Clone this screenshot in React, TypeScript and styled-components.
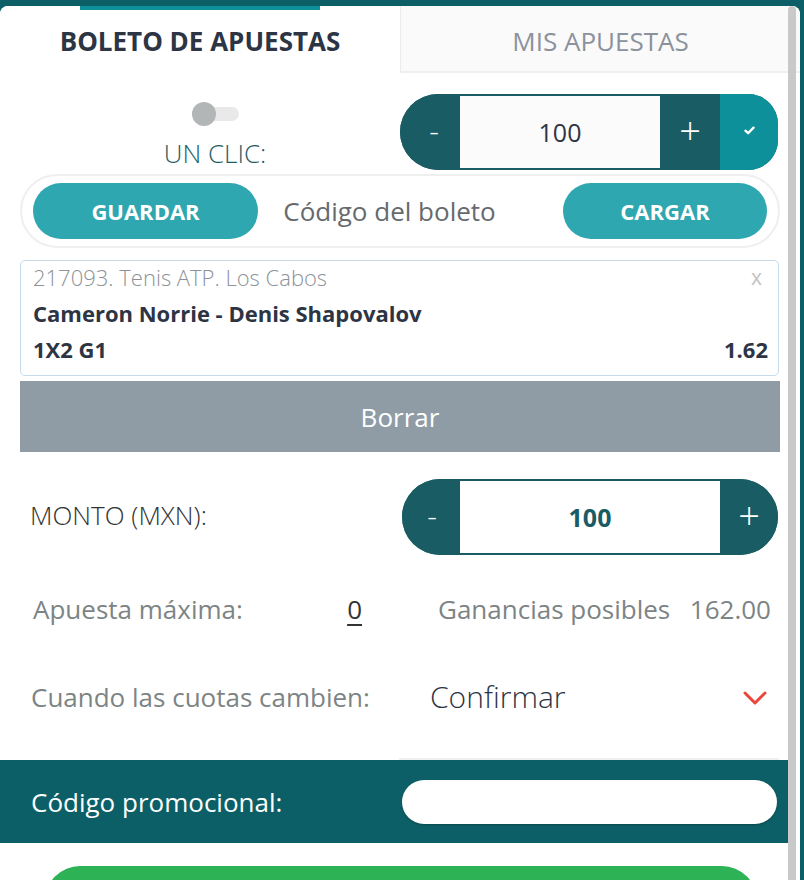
import React, { useState } from 'react';
import styled, { createGlobalStyle } from 'styled-components';

const DARK_TEAL = '#0c5f66';
const STEP_TEAL = '#1a5c64';
const BRIGHT_TEAL = '#0e909b';
const BUTTON_TEAL = '#2fa7b1';
const INK = '#2d3545';
const MUTED = '#7d8485';

const GlobalStyle = createGlobalStyle`
    body {
        margin: 0;
        background: ${DARK_TEAL};
        font-family: 'Open Sans', 'Liberation Sans', sans-serif;
    }
    * {
        box-sizing: border-box;
    }
`;

const Page = styled.div`
    height: 880px;
    overflow: hidden;
    padding-top: 6px;
`;

const Panel = styled.div`
    width: 800px;
    height: 874px;
    background: #ffffff;
    border-radius: 8px 8px 0 0;
    display: flex;
    overflow: hidden;
`;

const Content = styled.div`
    width: 788px;
    display: flex;
    flex-direction: column;
    & > * {
        flex-shrink: 0;
    }
`;

const ScrollTrack = styled.div`
    width: 8px;
    background: #c9c9c9;
    border-radius: 4px 4px 0 0;
`;

const Tabs = styled.div`
    display: grid;
    grid-template-columns: 400px 1fr;
    height: 67px;
    margin-right: -12px;
`;

const Tab = styled.div<{ $active?: boolean }>`
    display: flex;
    flex-direction: column;
    align-items: center;
    font-size: 26px;
    line-height: 36px;
    font-weight: ${(p) => (p.$active ? 700 : 400)};
    color: ${(p) => (p.$active ? INK : '#8a929d')};
    background: ${(p) => (p.$active ? '#ffffff' : '#fafafa')};
    border-left: ${(p) => (p.$active ? 'none' : '1px solid #ececec')};
    border-bottom: ${(p) => (p.$active ? 'none' : '2px solid #efefef')};
`;

const TabIndicator = styled.div<{ $show?: boolean }>`
    width: 240px;
    height: 4px;
    background: ${(p) => (p.$show ? BRIGHT_TEAL : 'transparent')};
`;

const TabLabel = styled.span`
    margin-top: 13px;
`;

const OneClickRow = styled.div`
    display: grid;
    grid-template-columns: 400px 1fr;
    padding: 21px 10px 0 0;
`;

const OneClick = styled.div`
    display: flex;
    flex-direction: column;
    align-items: center;
    padding: 8px 0 0 30px;
`;

const Toggle = styled.button`
    position: relative;
    width: 47px;
    height: 24px;
    border: none;
    background: transparent;
    padding: 0;
    cursor: pointer;
    &::before {
        content: '';
        position: absolute;
        left: 12px;
        right: 0;
        top: 5px;
        height: 14px;
        border-radius: 7px;
        background: #e9e9e9;
    }
    &::after {
        content: '';
        position: absolute;
        left: 0;
        top: 0;
        width: 24px;
        height: 24px;
        border-radius: 50%;
        background: #b3b6b6;
    }
`;

const OneClickLabel = styled.span`
    margin-top: 9px;
    font-size: 26px;
    line-height: 36px;
    font-weight: 300;
    color: #1d5e66;
`;

const Stepper = styled.div<{ $check?: boolean }>`
    display: flex;
    height: 76px;
    background: ${STEP_TEAL};
    border-radius: ${(p) => (p.$check ? '38px 30px 30px 38px' : '38px')};
    overflow: hidden;
`;

const StepButton = styled.button<{ $w: number; $bg?: string; $pad?: number; $minus?: boolean }>`
    width: ${(p) => p.$w}px;
    flex-shrink: 0;
    border: none;
    background: ${(p) => p.$bg || STEP_TEAL};
    color: #ffffff;
    font-family: inherit;
    font-size: ${(p) => (p.$minus ? 30 : 38)}px;
    font-weight: 300;
    padding: 0 0 4px ${(p) => p.$pad || 0}px;
    display: flex;
    align-items: center;
    justify-content: center;
    cursor: pointer;
`;

const StepValue = styled.div<{ $bold?: boolean }>`
    flex: 1;
    margin: 2px 0;
    background: ${(p) => (p.$bold ? '#ffffff' : '#fbfbfb')};
    display: flex;
    align-items: center;
    justify-content: center;
    font-size: 25px;
    font-weight: ${(p) => (p.$bold ? 700 : 400)};
    color: ${(p) => (p.$bold ? STEP_TEAL : INK)};
`;

const CodeBar = styled.div`
    margin: 3px 8px 0 20px;
    height: 74px;
    border: 2px solid #efefef;
    border-radius: 37px;
    display: grid;
    grid-template-columns: 225px 1fr 204px;
    align-items: center;
    padding: 0 11px;
`;

const PillButton = styled.button`
    height: 56px;
    border: none;
    border-radius: 28px;
    background: ${BUTTON_TEAL};
    color: #ffffff;
    font-family: inherit;
    font-size: 22px;
    font-weight: 700;
    cursor: pointer;
`;

const CodeLabel = styled.span`
    text-align: center;
    font-size: 26px;
    color: #666a6e;
    padding-right: 42px;
`;

const BetCard = styled.div`
    margin: 12px 9px 0 20px;
    height: 116px;
    border: 1.5px solid #c7dbea;
    border-radius: 5px;
    padding: 0 10px 0 12px;
    display: flex;
    flex-direction: column;
`;

const BetLine = styled.div<{ $first?: boolean }>`
    display: flex;
    justify-content: space-between;
    align-items: center;
    height: 36px;
    margin-top: ${(p) => (p.$first ? -2 : 0)}px;
`;

const EventName = styled.span`
    font-size: 22px;
    font-weight: 300;
    color: #8d9298;
`;

const Close = styled.span`
    font-size: 21px;
    color: #c2c2c2;
    margin-right: 6px;
`;

const Strong = styled.span`
    font-size: 22px;
    font-weight: 700;
    color: ${INK};
`;

const ClearButton = styled.button`
    margin: 5px 8px 0 20px;
    height: 71px;
    border: none;
    background: #8f9ca6;
    color: #ffffff;
    font-family: inherit;
    font-size: 26px;
    cursor: pointer;
`;

const AmountRow = styled.div`
    margin-top: 27px;
    display: grid;
    grid-template-columns: 402px 376px;
    align-items: center;
`;

const AmountLabel = styled.span`
    padding: 0 0 4px 30px;
    font-size: 26px;
    font-weight: 300;
    color: #333333;
`;

const InfoRow = styled.div`
    display: grid;
    grid-template-columns: 405px 1fr auto;
    align-items: center;
    height: 60px;
    margin-top: 24px;
    padding: 0 17px 0 33px;
    font-size: 26px;
    color: ${MUTED};
`;

const InfoPair = styled.div`
    display: flex;
    justify-content: space-between;
    padding-right: 76px;
`;

const Linked = styled.span`
    color: #333333;
    text-decoration: underline;
    text-underline-offset: 5px;
`;

const OddsRow = styled.div`
    display: grid;
    grid-template-columns: 399px 1fr;
    height: 121px;
    align-items: stretch;
`;

const OddsLabel = styled.span`
    padding: 40px 0 0 31px;
    font-size: 26px;
    line-height: 36px;
    color: ${MUTED};
`;

const Select = styled.div`
    display: flex;
    align-items: flex-start;
    justify-content: space-between;
    padding: 40px 12px 0 31px;
    margin-right: 9px;
    border-bottom: 2px solid #efefef;
    font-size: 30px;
    line-height: 36px;
    font-weight: 300;
    color: ${INK};
    svg {
        margin-top: 12px;
    }
`;

const PromoBar = styled.div`
    height: 83px;
    background: ${DARK_TEAL};
    display: grid;
    grid-template-columns: 402px 1fr;
    align-items: center;
    padding-right: 11px;
`;

const PromoLabel = styled.span`
    padding-left: 31px;
    font-size: 26px;
    color: #ffffff;
`;

const PromoInput = styled.input`
    height: 44px;
    border: none;
    border-radius: 22px;
    background: #ffffff;
    box-shadow: 0 1px 2px rgba(0, 0, 0, 0.25);
    outline: none;
    padding: 0 20px;
    font-family: inherit;
    font-size: 20px;
`;

const PlaceButton = styled.button`
    margin: 23px 31px 0 45px;
    height: 70px;
    border: none;
    border-radius: 35px;
    background: #2eb256;
`;

const CheckIcon = () => (
    <svg width="11" height="9" viewBox="0 0 12 10" fill="none">
        <path d="M1.5 5.2 L4.5 8 L10.5 1.8" stroke="#ffffff" strokeWidth="2.6" strokeLinecap="round" strokeLinejoin="round" />
    </svg>
);

const Chevron = () => (
    <svg width="24" height="14" viewBox="0 0 24 14" fill="none">
        <path d="M2 2 L12 12 L22 2" stroke="#e8473a" strokeWidth="3" strokeLinecap="round" strokeLinejoin="round" />
    </svg>
);

export default function App() {
    const [oneClick, setOneClick] = useState(false);
    const [quick, setQuick] = useState(100);
    const [amount, setAmount] = useState(100);
    const odds = 1.62;

    return (
        <>
            <GlobalStyle />
            <Page>
                <Panel>
                    <Content>
                        <Tabs>
                            <Tab $active>
                                <TabIndicator $show />
                                <TabLabel>BOLETO DE APUESTAS</TabLabel>
                            </Tab>
                            <Tab>
                                <TabIndicator />
                                <TabLabel>MIS APUESTAS</TabLabel>
                            </Tab>
                        </Tabs>

                        <OneClickRow>
                            <OneClick>
                                <Toggle aria-pressed={oneClick} onClick={() => setOneClick(!oneClick)} />
                                <OneClickLabel>UN CLIC:</OneClickLabel>
                            </OneClick>
                            <Stepper $check>
                                <StepButton $w={60} $pad={8} $minus onClick={() => setQuick(Math.max(0, quick - 10))}>
                                    -
                                </StepButton>
                                <StepValue>{quick}</StepValue>
                                <StepButton $w={60} onClick={() => setQuick(quick + 10)}>
                                    +
                                </StepButton>
                                <StepButton $w={58} $bg={BRIGHT_TEAL}>
                                    <CheckIcon />
                                </StepButton>
                            </Stepper>
                        </OneClickRow>

                        <CodeBar>
                            <PillButton>GUARDAR</PillButton>
                            <CodeLabel>Código del boleto</CodeLabel>
                            <PillButton>CARGAR</PillButton>
                        </CodeBar>

                        <BetCard>
                            <BetLine $first>
                                <EventName>217093. Tenis ATP. Los Cabos</EventName>
                                <Close>x</Close>
                            </BetLine>
                            <BetLine>
                                <Strong>Cameron Norrie - Denis Shapovalov</Strong>
                            </BetLine>
                            <BetLine>
                                <Strong>1X2 G1</Strong>
                                <Strong>{odds.toFixed(2)}</Strong>
                            </BetLine>
                        </BetCard>

                        <ClearButton>Borrar</ClearButton>

                        <AmountRow>
                            <AmountLabel>MONTO (MXN):</AmountLabel>
                            <Stepper>
                                <StepButton $w={58} $pad={2} $minus onClick={() => setAmount(Math.max(0, amount - 10))}>
                                    -
                                </StepButton>
                                <StepValue $bold>{amount}</StepValue>
                                <StepButton $w={58} onClick={() => setAmount(amount + 10)}>
                                    +
                                </StepButton>
                            </Stepper>
                        </AmountRow>

                        <InfoRow>
                            <InfoPair>
                                <span>Apuesta máxima:</span>
                                <Linked>0</Linked>
                            </InfoPair>
                            <span>Ganancias posibles</span>
                            <span>{(amount * odds).toFixed(2)}</span>
                        </InfoRow>

                        <OddsRow>
                            <OddsLabel>Cuando las cuotas cambien:</OddsLabel>
                            <Select>
                                <span>Confirmar</span>
                                <Chevron />
                            </Select>
                        </OddsRow>

                        <PromoBar>
                            <PromoLabel>Código promocional:</PromoLabel>
                            <PromoInput />
                        </PromoBar>

                        <PlaceButton />
                    </Content>
                    <ScrollTrack />
                </Panel>
            </Page>
        </>
    );
}
